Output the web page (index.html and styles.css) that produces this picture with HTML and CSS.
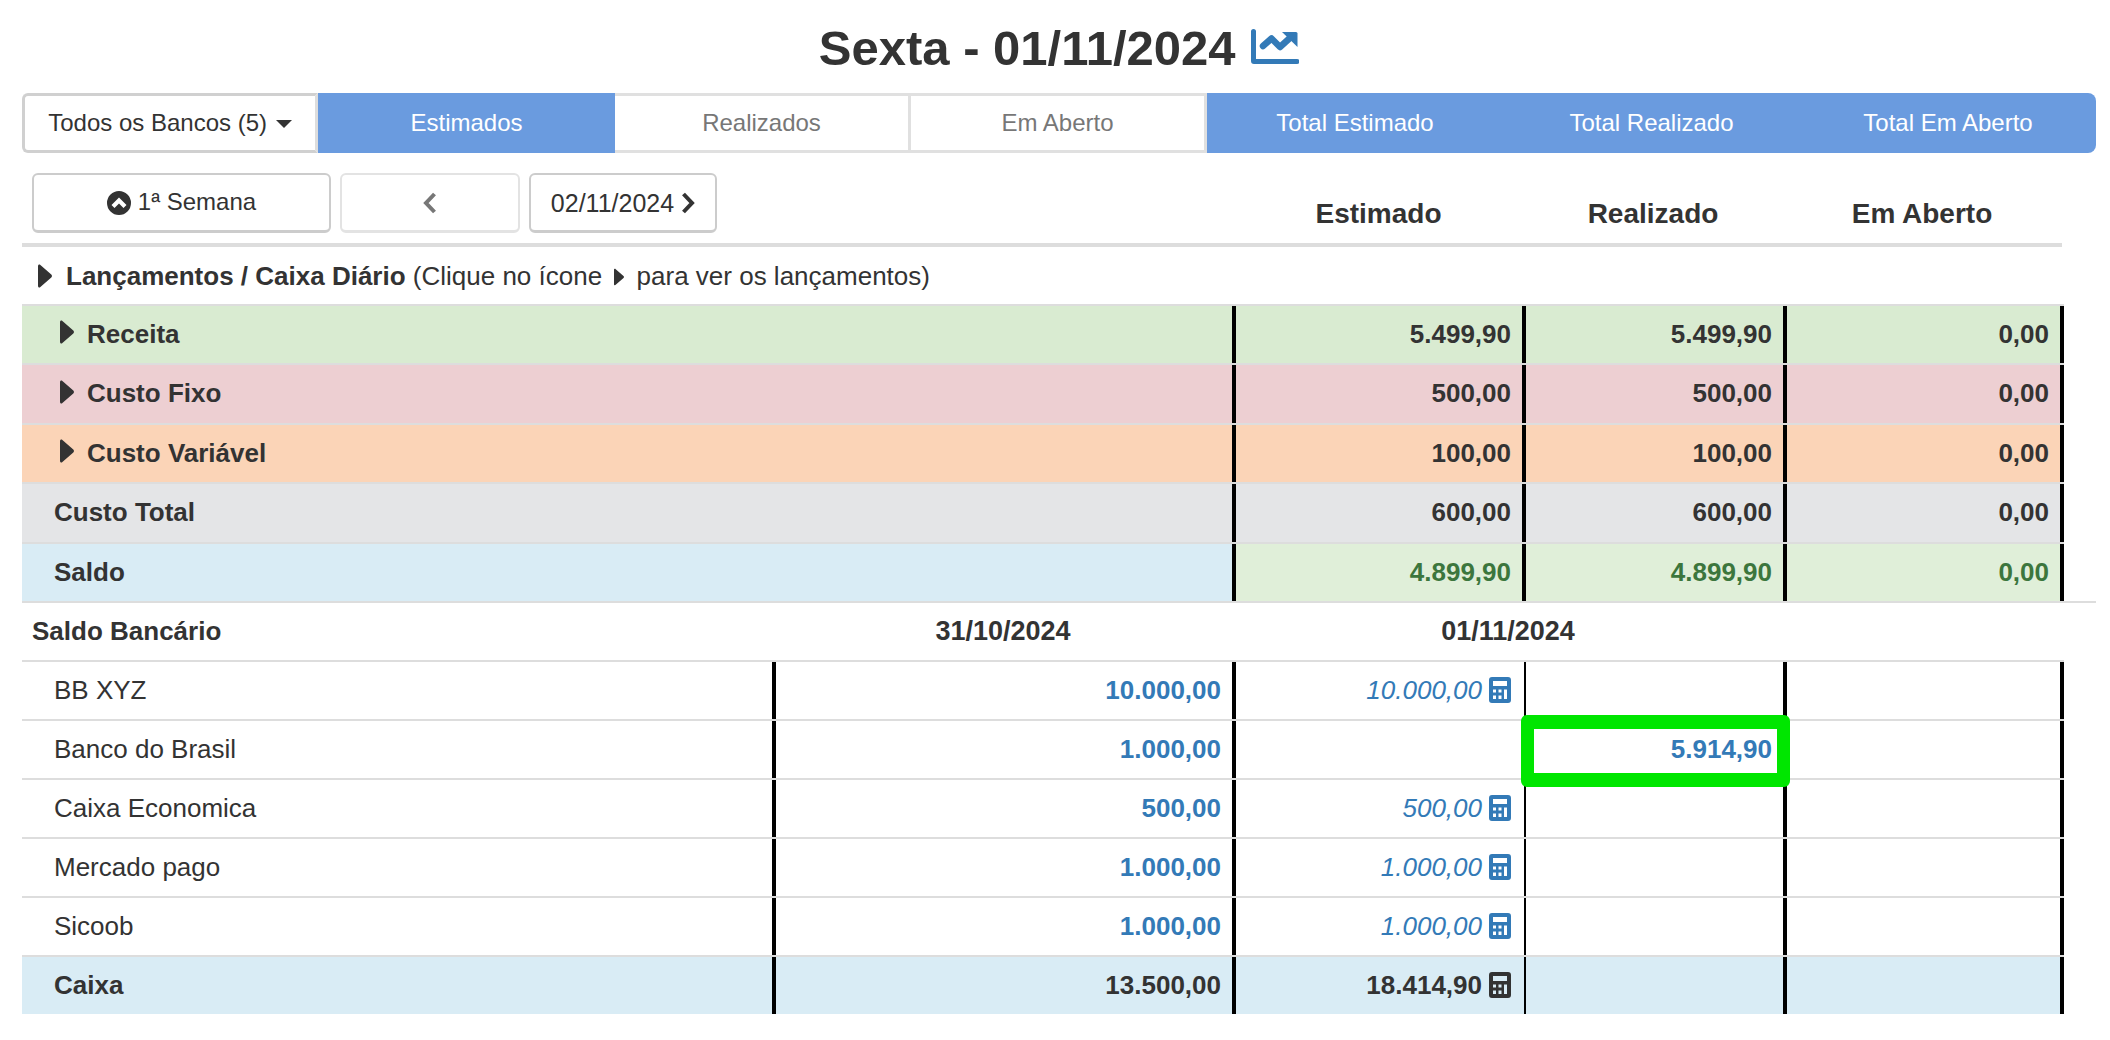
FILE: index.html
```html
<!DOCTYPE html>
<html lang="pt">
<head>
<meta charset="utf-8">
<title>Sexta - 01/11/2024</title>
<link rel="stylesheet" href="styles.css">
</head>
<body>
<svg class="sprite" width="0" height="0" aria-hidden="true">
  <symbol id="i-calc" viewBox="0 0 22 26">
    <path fill-rule="evenodd" d="M3 0h16a3 3 0 0 1 3 3v20a3 3 0 0 1-3 3H3a3 3 0 0 1-3-3V3a3 3 0 0 1 3-3zM4 4v5h14V4zM4 12.500v3h3v-3zM9.500 12.500v3h3v-3zM15 12.500v9.500h3v-9.500zM4 18.500v3.500h3v-3.500zM9.500 18.500v3.500h3v-3.500z"/>
  </symbol>
  <symbol id="i-tri" viewBox="0 0 14 24">
    <path d="M0 2C0 .6 1.400 0 2.400 1L13.300 10.500c.9.900.9 2.100 0 3L2.400 23C1.400 24 0 23.400 0 22z"/>
  </symbol>
</svg>
<main class="page">
  <h1 class="title">Sexta - 01/11/2024
    <svg class="chart" viewBox="0 0 48 36"><path d="M0 2.500a2.500 2.500 0 0 1 5 0V30h41a2.500 2.500 0 0 1 0 5H3a3 3 0 0 1-3-3z"/><path d="M31 3h14a1.500 1.500 0 0 1 1.500 1.500V18z"/><path class="chart-line" d="M12 17l8.500-7.500L29 18l11-10"/></svg>
  </h1>

  <nav class="tabs">
    <button class="tab tab-drop">Todos os Bancos (5) <span class="caret"></span></button>
    <button class="tab tab-on">Estimados</button>
    <button class="tab tab-off">Realizados</button>
    <button class="tab tab-off">Em Aberto</button>
    <button class="tab tab-on">Total Estimado</button>
    <button class="tab tab-on">Total Realizado</button>
    <button class="tab tab-on tab-end">Total Em Aberto</button>
  </nav>

  <section class="tools">
    <div class="tool-btns">
      <button class="btn btn-week"><svg class="up" viewBox="0 0 24 24"><path fill-rule="evenodd" d="M12 0a12 12 0 1 1 0 24 12 12 0 0 1 0-24zM12 6.500l-7.500 7.500 3 3 4.500-4.500 4.500 4.500 3-3z"/></svg> 1ª Semana</button>
      <button class="btn btn-prev"><svg class="chev" viewBox="0 0 14 22"><path d="M11.500 2 3 11l8.500 9"/></svg></button>
      <button class="btn btn-next">02/11/2024<svg class="chev chev-dark" viewBox="0 0 14 22"><path d="M2.500 2 11 11l-8.500 9"/></svg></button>
    </div>
    <div class="tool-head">Estimado</div>
    <div class="tool-head">Realizado</div>
    <div class="tool-head">Em Aberto</div>
  </section>

  <p class="note"><svg class="tri"><use href="#i-tri"/></svg><b>Lançamentos / Caixa Diário</b> (Clique no ícone <svg class="tri tri-in"><use href="#i-tri"/></svg> para ver os lançamentos)</p>

  <section class="sheet">
    <div class="row row4 bg-rec"><div class="cell name b"><svg class="tri"><use href="#i-tri"/></svg>Receita</div><div class="cell num b">5.499,90</div><div class="cell num b">5.499,90</div><div class="cell num b">0,00</div></div>
    <div class="row row4 bg-fix"><div class="cell name b"><svg class="tri"><use href="#i-tri"/></svg>Custo Fixo</div><div class="cell num b">500,00</div><div class="cell num b">500,00</div><div class="cell num b">0,00</div></div>
    <div class="row row4 bg-var"><div class="cell name b"><svg class="tri"><use href="#i-tri"/></svg>Custo Variável</div><div class="cell num b">100,00</div><div class="cell num b">100,00</div><div class="cell num b">0,00</div></div>
    <div class="row row4 bg-tot"><div class="cell label b">Custo Total</div><div class="cell num b">600,00</div><div class="cell num b">600,00</div><div class="cell num b">0,00</div></div>
    <div class="row row4 bg-sal"><div class="cell label b">Saldo</div><div class="cell num b pos">4.899,90</div><div class="cell num b pos">4.899,90</div><div class="cell num b pos">0,00</div></div>
  </section>

  <section class="bank">
    <div class="bank-head"><div class="bh-name">Saldo Bancário</div><div class="bh-date">31/10/2024</div><div class="bh-date">01/11/2024</div></div>
    <div class="row row5"><div class="cell label">BB XYZ</div><div class="cell num link b">10.000,00</div><div class="cell num link it thin">10.000,00<svg class="calc"><use href="#i-calc"/></svg></div><div class="cell"></div><div class="cell"></div></div>
    <div class="row row5"><div class="cell label">Banco do Brasil</div><div class="cell num link b">1.000,00</div><div class="cell num thin"></div><div class="cell num link b focus">5.914,90</div><div class="cell"></div></div>
    <div class="row row5"><div class="cell label">Caixa Economica</div><div class="cell num link b">500,00</div><div class="cell num link it thin">500,00<svg class="calc"><use href="#i-calc"/></svg></div><div class="cell"></div><div class="cell"></div></div>
    <div class="row row5"><div class="cell label">Mercado pago</div><div class="cell num link b">1.000,00</div><div class="cell num link it thin">1.000,00<svg class="calc"><use href="#i-calc"/></svg></div><div class="cell"></div><div class="cell"></div></div>
    <div class="row row5"><div class="cell label">Sicoob</div><div class="cell num link b">1.000,00</div><div class="cell num link it thin">1.000,00<svg class="calc"><use href="#i-calc"/></svg></div><div class="cell"></div><div class="cell"></div></div>
    <div class="row row5 bg-cash"><div class="cell label b">Caixa</div><div class="cell num b">13.500,00</div><div class="cell num b thin">18.414,90<svg class="calc"><use href="#i-calc"/></svg></div><div class="cell"></div><div class="cell"></div></div>
  </section>
</main>
</body>
</html>
```

FILE: styles.css
```css
* { box-sizing: border-box; }
html, body { margin: 0; height: 100%; }
body { background: #fff; color: #333; font: 26px/1.2 "Liberation Sans", Arial, sans-serif; overflow: hidden; }
.sprite { position: absolute; }
.page { padding: 0 14px 0 22px; width: 2110px; }

.title { margin: 0; height: 93px; padding-top: 20px; text-align: center; font-size: 49px; line-height: 56px; font-weight: 700; color: #333; }
.chart { width: 48px; height: 36px; fill: #337ab7; margin-left: 2px; }
.chart-line { fill: none; stroke: #337ab7; stroke-width: 6.500; stroke-linecap: round; stroke-linejoin: round; }

.tabs { display: grid; grid-template-columns: 296px 297px 296px 296px 296px 297px 296px; height: 60px; font-size: 24px; }
.tab { font: inherit; border: 0; padding: 0; background: #fff; }
.tab-drop { border: 3px solid #d0d0d0; border-right-color: #ddd; border-radius: 6px 0 0 6px; color: #333; }
.caret { display: inline-block; width: 0; height: 0; border-left: 8px solid transparent; border-right: 8px solid transparent; border-top: 8px solid #333; vertical-align: middle; margin-left: 2px; }
.tab-on { background: #6a9bdf; color: #fff; }
.tab-off { border: 3px solid #e0e0e0; border-left-width: 0; color: #777; }
.tab-end { border-radius: 0 8px 8px 0; }

.tools { display: grid; grid-template-columns: 1211px 291px 258px 280px; width: 2040px; height: 94px; border-bottom: 4px solid #ddd; padding-top: 20px; }
.tool-btns { display: flex; gap: 9px; margin-left: 10px; }
.btn { font: inherit; font-size: 24px; height: 60px; background: #fff; border: 2px solid #ccc; border-bottom-width: 3px; border-radius: 6px; color: #333; padding: 0; display: flex; align-items: center; justify-content: center; gap: 7px; }
.btn-week { width: 299px; }
.btn-prev { width: 180px; border-color: #e3e3e3; }
.btn-next { width: 188px; font-size: 25px; }
.up { width: 24px; height: 24px; fill: #333; }
.chev { width: 14px; height: 22px; fill: none; stroke: #777; stroke-width: 4; }
.chev-dark { stroke: #333; }
.tool-head { text-align: center; font-weight: 700; font-size: 28px; padding-top: 24px; }

.note { margin: 0; height: 57px; padding-top: 2px; display: flex; align-items: center; white-space: pre; }
.tri { width: 14px; height: 24px; fill: #333; margin: -2px 14px 0 16px; flex: none; }
.tri-in { margin: 0 5px; height: 18px; width: 10px; }

.row { display: grid; width: 2042px; height: 59.4px; border-top: 2px solid #ddd; }
.row4 { grid-template-columns: 1214px 290px 261px 277px; }
.row5 { grid-template-columns: 754px 460px 290px 261px 277px; height: 59px; }
.cell { display: flex; align-items: center; padding: 0 11px 0 12px; border-right: 4px solid #000; white-space: nowrap; min-width: 0; }
.num { justify-content: flex-end; }
.cell.label { padding-left: 32px; }
.cell.name { padding-left: 38px; }
.name .tri { margin: -5px 13px 0 0; }
.b { font-weight: 700; }
.it { font-style: italic; }
.thin { border-right-width: 2px; padding-right: 13px; }
.link { color: #337ab7; }
.pos { color: #3c763d; }
.calc { width: 22px; height: 26px; fill: currentColor; margin-left: 7px; }

.bg-rec { background: #d9ebd1; }
.bg-fix { background: #edcfd2; }
.bg-var { background: #fbd4b7; }
.bg-tot { background: #e4e5e7; }
.bg-sal { background: #d9ecf5; }
.bg-sal .num { background: #e0efd9; }
.bg-cash { background: #d9ecf5; }

.bank-head { display: grid; grid-template-columns: 751px 460px 550px; height: 59px; border-top: 2px solid #ddd; align-items: center; width: 2074px; font-weight: 700; }
.bh-name { padding-left: 10px; }
.bh-date { text-align: center; font-size: 27px; }
.focus { position: relative; }
.focus::after { content: ""; position: absolute; left: -5px; right: -7px; top: -6px; bottom: -9px; border: 14px solid #00e600; border-width: 14px 13px; border-radius: 6px; }
```
